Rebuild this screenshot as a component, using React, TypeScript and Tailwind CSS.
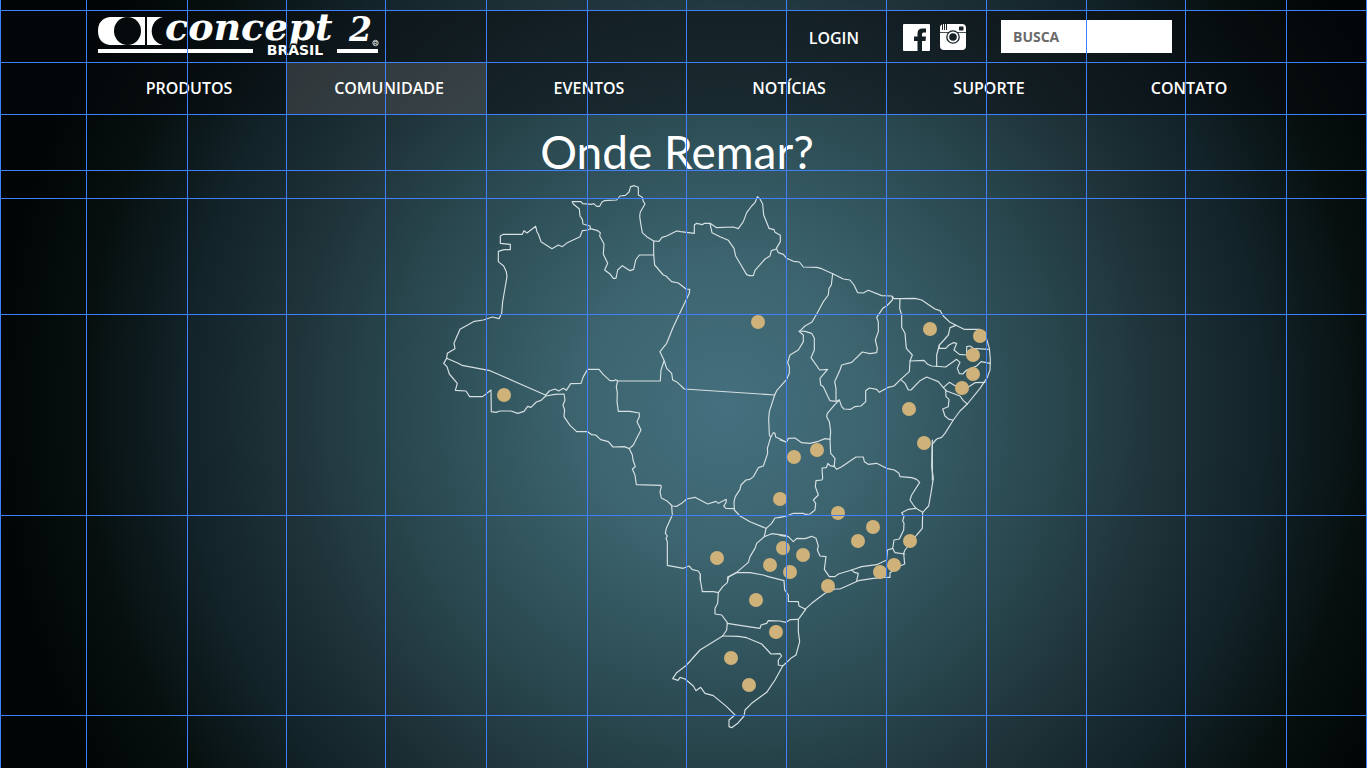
const NAV_ITEMS = ["PRODUTOS", "COMUNIDADE", "EVENTOS", "NOTÍCIAS", "SUPORTE", "CONTATO"];

const GUIDE_COLUMNS = [0, 86, 187, 286, 385, 486, 587, 686, 786, 886, 986, 1086, 1185, 1286, 1366];
const GUIDE_ROWS = [10, 62, 114, 170, 198, 314, 515, 715];

const PINS: [number, number][] = [
  [758, 322], [930, 329], [980, 336], [973, 355], [973, 374], [962, 388], [909, 409],
  [924, 443], [817, 450], [794, 457], [780, 499], [838, 513], [873, 527], [858, 541],
  [910, 541], [783, 548], [803, 555], [717, 558], [770, 565], [894, 565], [790, 572],
  [880, 572], [828, 586], [756, 600], [776, 632], [731, 658], [749, 685], [504, 395],
];

/* State borders, grouped by region; each region is drawn at three times its size. */
const REGIONS: { origin: [number, number]; borders: string[] }[] = [
  {
    origin: [430, 180],
    borders: [
      "M427,65 453,65 458,71 486,73 491,71 500,79 509,79 516,66 523,62 560,60 570,48 586,46 597,36 602,20 613,17 625,22 625,45 637,52 640,64 645,72 631,96 629,108 632,130 637,158 650,170 671,183",
      "M427,65 430,72 448,87 450,108 457,118 459,132 480,138 481,146",
      "M50,535 52,520 75,506 72,490 76,480 90,448 133,424 160,420 187,411 207,416 215,400 218,365 224,330 231,290 229,275 221,258 205,245 205,214 222,209 241,209 241,193 211,190 211,168 220,163 277,163 282,152 291,159 317,139 321,156 325,162 333,185 366,206 385,195 397,200 412,188 450,170 457,152 473,150 481,146 503,152 511,158 509,168 522,192 520,223 533,250 524,270 541,283 550,295 558,295 563,270 577,257 600,272 611,268 617,240 628,225 671,225",
    ],
  },
  {
    origin: [430, 340],
    borders: [
      "M50,55 41,70 51,80 58,102 82,130 76,151 108,153 119,170 158,170 183,150 184,215 198,217 210,213 243,213 263,220 282,214 293,199 303,202 319,186 333,181 347,168",
      "M50,55 83,69 96,76 180,92 346,165",
      "M347,165 358,153 375,147 386,153 400,145 409,151 422,131 453,130 460,110 473,88 507,88 520,104 540,122 552,122 557,119 563,123 691,123 693,90 702,63",
      "M563,123 559,140 562,160 561,185 565,214 600,214 628,219 628,230 621,245 633,270 620,295 610,315 598,326",
      "M347,168 375,163 402,162 405,180 399,195 404,210 402,230 420,256 440,275 473,275 485,284 497,285 512,299 535,305 549,321 583,320 598,326 607,345 609,360 616,380 607,387 615,405 619,434 692,436",
    ],
  },
  {
    origin: [640, 180],
    borders: [
      "M41,183 57,184 66,172 80,168 110,153 122,155 163,160 163,135 170,130 187,134 193,130 210,130 230,143 280,141 295,146 310,125 320,98 335,78 345,68 352,50 360,57 368,72 371,105 387,145 402,149 405,157 421,166 421,185 409,205 415,218 430,223 440,235 460,244 478,246 490,261 530,262 545,266 578,281",
      "M210,130 216,158 240,170 265,181 282,205 287,228 303,255 320,284 328,287 340,287 345,271 375,237 390,228 394,212 409,207",
      "M41,183 41,224 44,255 70,285 78,288 95,305 115,309 138,327 149,328 148,340 100,440 80,490 60,515 73,543 80,565 95,580 98,600 112,607 133,627 404,645",
      "M578,281 574,315 567,325 565,345 550,365 530,402 516,426 495,438 478,455 490,465 490,485 475,510 450,525 443,548 448,560 448,580 440,598 410,632 404,645",
    ],
  },
  {
    origin: [780, 240],
    borders: [
      "M57,273 75,274 95,280 103,295 103,330 93,353 119,390 143,388 120,415 122,435 130,440 143,468 150,482 168,484 178,480 185,500 192,507 212,508 224,500 243,498 257,485 257,452 268,444 290,448 298,457 325,442 342,438 362,418 388,395 390,363",
      "M158,101 190,117 210,120 222,135 233,158 250,159 265,151 305,167 335,168 342,176 360,176 405,175 425,180 465,207 480,212 490,228 510,247 528,256 552,268 600,268 618,290 628,325 631,360 630,390 622,412 600,445 562,492 540,513 520,540 495,580 485,592 470,597 457,612 457,720",
      "M338,170 337,180 320,198 310,203 290,232 295,245 295,275 286,300 292,325 290,338 270,341 247,336 215,367 185,375 180,390 164,425 168,445 168,484",
      "M360,178 359,205 365,225 365,262 375,280 379,325 397,345 390,363 432,361 443,373 455,378 497,381 530,358 540,367 532,385 538,401 548,402 560,390 590,378 603,365 631,370",
      "M528,256 510,263 505,285 492,300 478,315 470,345 470,378",
      "M478,315 477,325 497,325 507,315 520,308 530,310 522,330 538,343 560,345 560,320 570,318 580,325 625,328",
      "M362,418 375,430 385,450 393,450 420,422 440,411 455,417 475,425 490,443 508,427 525,437 565,441 585,428 615,427",
      "M490,443 500,453 540,468 550,482 562,492",
      "M497,452 498,470 507,478 505,500 488,507 495,528 507,538 520,540",
      "M178,480 165,493 142,520 140,530 148,545 152,575 150,598",
      "M0,600 20,606 25,595 45,594 65,608 90,610 115,604 135,596 150,598 152,640 165,655 163,675",
    ],
  },
  {
    origin: [640, 380],
    borders: [
      "M404,45 388,95 386,115 388,165 392,172 400,158 405,160 407,171 422,178 437,186",
      "M392,172 382,205 383,220 370,258 355,263 340,290 330,298 318,300 303,315 300,328 286,350 282,365 283,390 300,408 330,425 378,445",
      "M62,316 64,320 60,335 64,354 80,362 97,378 110,379 125,370 140,357 165,352 203,372 228,364 235,370 259,358 258,368 251,378 258,385 283,386",
      "M95,378 97,405 79,445 76,460 82,468 78,475 82,485 82,556 130,565 147,558 157,569 175,573 181,583 181,600",
      "M420,412 405,414 395,430 378,446 373,470",
      "M440,467 395,461 373,470 350,490 345,505 330,530 325,547 290,577 265,592 262,600",
    ],
  },
  {
    origin: [780, 440],
    borders: [
      "M163,75 162,78 170,88 185,80 228,51 250,51 253,65 265,73 290,70 320,85 343,90 357,100 360,110 395,113 410,118 419,127 395,165 390,180 400,195 408,205 428,217",
      "M163,80 150,77 144,70 139,83 126,84 128,115 125,120 108,122 106,140 115,165 100,180 107,190 105,210 90,222 75,223 70,220 40,220 20,228 0,232",
      "M408,205 385,208 365,218 372,230 368,242 372,250 371,270 358,297 342,300 338,325 322,330 320,360 290,374 245,380 215,390 175,402 165,410 148,410 133,388 138,350 120,348 112,330 115,318 108,295 95,289 75,296 50,295 40,305 25,290 0,286",
      "M457,0 455,80 460,115 452,165 446,198 428,217 427,265 410,285 375,330 371,340 374,372 355,380 330,398 330,412 310,412 280,415 235,422 180,447 165,447 135,460 95,490 75,508",
      "M338,325 345,338 374,342",
      "M215,390 223,397 235,400 230,422",
    ],
  },
  {
    origin: [650, 560],
    borders: [
      "M151,60 157,95 190,95 205,98",
      "M151,60 151,45",
      "M235,52 232,68 218,80 205,98 203,130 195,145 195,162 215,165 232,188 230,210 218,228",
      "M232,52 260,38 300,38 340,45 355,50 402,62 404,90 415,105 415,124 445,125 447,138 467,148 445,178 445,215 449,245 438,285 425,293 398,318 375,360 350,397 305,430 285,450 282,468 265,488 245,503 237,500 237,480 255,465 230,440 190,407 165,400 152,382 138,392 130,378 105,357 90,352 84,361 68,356 80,338 110,315 150,270 218,228",
      "M232,190 270,196 330,205 333,195 350,190 355,182 390,183 408,187 420,179 445,178",
      "M218,228 265,229 290,233 335,252 363,282 390,281 395,288 385,300 385,315 398,318",
    ],
  },
];

function Logo() {
  return (
    <svg
      className="overflow-visible"
      width="284"
      height="46"
      viewBox="97 13 284 46"
      fill="white"
      role="img"
      aria-label="Concept 2 Brasil"
    >
      <path d="M110 17H145V45H110C102 44 98 39 98 31S102 18 110 17Z" />
      <ellipse cx="127.500" cy="31" rx="13.500" ry="14" fill="#050b0d" />
      <path d="M147 17H163C148 20 148 42 163 45H147Z" />
      <text x="165" y="40" fontFamily="'DejaVu Serif', serif" fontWeight="700" fontStyle="italic" fontSize="38">
        concept
      </text>
      <text x="349" y="41" fontFamily="'DejaVu Serif', serif" fontWeight="700" fontStyle="italic" fontSize="33">
        2
      </text>
      <circle cx="375.500" cy="43" r="2.700" fill="none" stroke="white" strokeWidth=".8" />
      <text x="373.800" y="45" fontFamily="'Liberation Sans', sans-serif" fontSize="5">
        R
      </text>
      <path d="M98 49H253V53H98ZM337 49H378V53H337Z" />
      <text
        x="295"
        y="55"
        textAnchor="middle"
        fontFamily="'DejaVu Sans', sans-serif"
        fontWeight="700"
        fontSize="14"
        stroke="#0a1214"
        strokeWidth="3"
        paintOrder="stroke"
      >
        BRASIL
      </text>
    </svg>
  );
}

function FacebookIcon() {
  return (
    <svg width="27" height="27" viewBox="0 0 27 27" aria-hidden="true">
      <path
        fill="white"
        fillRule="evenodd"
        d="M1 0H26Q27 0 27 1V26Q27 27 26 27H19V17H22.500L23 12.500H19V10Q19 8.500 20.500 8.500H23V4.500H19.500Q14.500 4.500 14.500 9.500V12.500H11V17H14.500V27H1Q0 27 0 26V1Q0 0 1 0Z"
      />
    </svg>
  );
}

function InstagramIcon() {
  return (
    <svg width="26" height="26" viewBox="0 0 26 26" aria-hidden="true">
      <rect width="26" height="26" rx="4" fill="white" />
      <g fill="none" stroke="#162226">
        <path d="M2.500 0V6M4.500 0V6M6.500 0V6" />
        <path d="M0 8.500H26" strokeWidth=".8" />
        <circle cx="13" cy="13" r="6.200" fill="white" strokeWidth="1.300" />
      </g>
      <rect x="19" y="2.500" width="4.500" height="4" rx=".6" fill="#162226" />
      <circle cx="13" cy="13" r="3.800" fill="#162226" />
    </svg>
  );
}

function BrazilMap() {
  return (
    <svg width="640" height="560" viewBox="366 180 640 560" role="img" aria-label="Onde Remar?">
      {REGIONS.map(({ origin, borders }) => (
        <g
          key={origin.join()}
          transform={`translate(${origin[0]} ${origin[1]}) scale(.33333)`}
          fill="none"
          stroke="#d6e0e2"
          strokeWidth="3.500"
          strokeLinejoin="round"
          strokeLinecap="round"
        >
          {borders.map((d) => (
            <path key={d} d={d} />
          ))}
        </g>
      ))}
      {PINS.map(([x, y]) => (
        <circle key={`${x}-${y}`} cx={x} cy={y} r="7" fill="#cfb17a" />
      ))}
    </svg>
  );
}

function Guides() {
  return (
    <svg className="pointer-events-none absolute inset-0 h-full w-full" aria-hidden="true" fill="#4080ff">
      {GUIDE_COLUMNS.map((x) => (
        <rect key={x} x={x} width="1" height="100%" />
      ))}
      {GUIDE_ROWS.map((y) => (
        <rect key={y} y={y} width="100%" height="1" />
      ))}
    </svg>
  );
}

export default function App() {
  return (
    <div className="relative min-h-screen overflow-hidden bg-[radial-gradient(circle_at_53%_53%,#446f7e_0px,#3d6570_140px,#32555e_240px,#28454c_340px,#1e3238_440px,#122329_540px,#07100f_640px,#010506_730px)] pt-2.5 font-['Open_Sans','Noto_Sans',sans-serif] text-white">
      <header className="bg-[#05080c]/50 pl-[5px]">
        <div className="mx-auto flex h-[52px] max-w-[1200px] items-center justify-between pr-[114px] pl-[11px]">
          <a href="#inicio">
            <Logo />
          </a>
          <div className="flex items-center">
            <a href="#login" className="mr-11 pt-1 text-base font-semibold">
              LOGIN
            </a>
            <div className="mr-[35px] flex gap-2.5 pt-0.5">
              <a href="#facebook" aria-label="Facebook">
                <FacebookIcon />
              </a>
              <a href="#instagram" aria-label="Instagram">
                <InstagramIcon />
              </a>
            </div>
            <input
              type="search"
              aria-label="Busca"
              placeholder="BUSCA"
              className="h-[33px] w-[171px] bg-white px-3 text-sm font-bold text-[#333] outline-none placeholder:text-[#6a6a6a]"
            />
          </div>
        </div>
        <nav className="mx-auto grid h-[52px] max-w-[1200px] grid-cols-6">
          {NAV_ITEMS.map((item) => (
            <a
              key={item}
              href={`#${item.toLowerCase()}`}
              aria-current={item === "COMUNIDADE" ? "page" : undefined}
              className="flex items-center justify-center pl-1.5 text-base font-semibold aria-[current=page]:bg-white/15"
            >
              {item}
            </a>
          ))}
        </nav>
      </header>
      <main className="flex flex-col items-center pl-[5px]">
        <h1 className="pt-2.5 pr-[18px] font-[Lato,sans-serif] text-[46px] leading-14">Onde Remar?</h1>
        <BrazilMap />
      </main>
      <Guides />
    </div>
  );
}
